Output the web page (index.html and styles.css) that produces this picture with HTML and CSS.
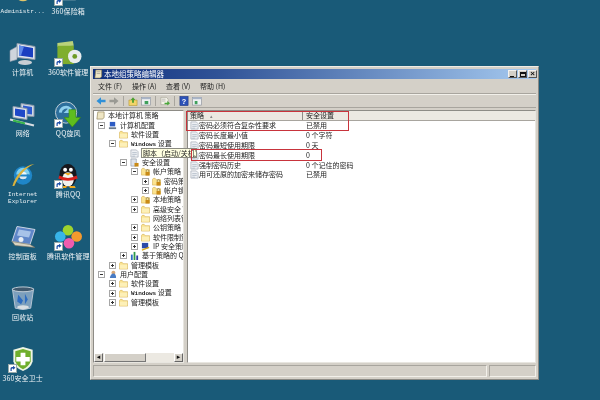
FILE: index.html
```html
<!DOCTYPE html>
<html lang="zh-CN">
<head>
<meta charset="utf-8">
<title>本地组策略编辑器</title>
<link rel="stylesheet" href="styles.css">
</head>
<body>
<svg class="defs" width="0" height="0" aria-hidden="true">
  <defs>
    <symbol id="folder" viewBox="0 0 10 10"><path d="M.5 2.500V9h9V3H4.500L3.500 1.500H1.500z" fill="#fbe38f" stroke="#cfa94a" stroke-width=".6"/><path d="M1 4h8v4.500H1z" fill="#fdf0b8"/></symbol>
    <symbol id="lockfolder" viewBox="0 0 10 10"><path d="M.5 2.500V9h9V3H4.500L3.500 1.500H1.500z" fill="#fbe38f" stroke="#cfa94a" stroke-width=".6"/><rect x="5" y="5.500" width="4.500" height="4" fill="#c98a16"/><path d="M5.800 5.500V4.200a1.400 1.400 0 0 1 2.800 0v1.300" fill="none" stroke="#7a6a40" stroke-width=".7"/></symbol>
    <symbol id="policy" viewBox="0 0 10 10"><path d="M1 1h6l2 2v6H1z" fill="#eef0f4" stroke="#9aa2ae" stroke-width=".7"/><path d="M2.500 4h5M2.500 6h5M2.500 8h3" stroke="#a9b2c0" stroke-width=".8"/></symbol>
    <symbol id="shortcut" viewBox="0 0 9 9"><rect x=".5" y=".5" width="8" height="8" fill="#fff" stroke="#9aa"/><path d="M2.500 7V4.500Q2.500 3 4 3H5V1.800L7.500 3.800 5 5.800V4.500H4.200Q3.700 4.500 3.700 5V7z" fill="#1f4fa8"/></symbol>
    <symbol id="monitor" viewBox="0 0 28 26"><path d="M8 3l18 3v13L8 17z" fill="#dfe6ee" stroke="#8b97a8"/><path d="M10 5l14 2.500v9.500L10 15z" fill="#1a3fc0"/><path d="M10 5l5 1-3 9-2 0z" fill="#5f8ae8"/><path d="M1 10l7-4v13l-7 2z" fill="#cfd5dc" stroke="#8b97a8" stroke-width=".6"/><ellipse cx="16" cy="22" rx="7" ry="2.500" fill="#c8cdd3"/></symbol>
  </defs>
</svg>

<main class="desktop">
  <section class="icons">
    <div class="dicon">
      <svg class="dglyph" viewBox="0 0 28 28"><circle cx="14" cy="14" r="9" fill="#e2c66a"/><circle cx="9" cy="17" r="4" fill="#7fa64a"/><circle cx="19" cy="17" r="4" fill="#7fa64a"/></svg>
      <span class="dlabel dlabel-latin">Administr...</span>
    </div>
    <div class="dicon">
      <svg class="dglyph" viewBox="0 0 28 26"><use href="#monitor"/></svg>
      <span class="dlabel">计算机</span>
    </div>
    <div class="dicon">
      <svg class="dglyph" viewBox="0 0 28 26"><path d="M12 2l13 2v11L12 14z" fill="#cfd8e4" stroke="#8796aa"/><path d="M14 4l9 1.500v7.500L14 12z" fill="#2c5ad0"/><path d="M4 5l14 2v11L4 16z" fill="#dfe5ec" stroke="#8796aa"/><path d="M6 7l10 1.500v7.500L6 14z" fill="#1f48c8"/><path d="M1 18l24 6" stroke="#d8dde2" stroke-width="2"/><path d="M4 19l12 3" stroke="#37b54a" stroke-width="2"/></svg>
      <span class="dlabel">网络</span>
    </div>
    <div class="dicon">
      <svg class="dglyph" viewBox="0 0 28 28"><circle cx="14" cy="14" r="9.500" fill="#1f86c8"/><path d="M7 13h14a7 7 0 0 0-14 0z" fill="#7fd0f0"/><path d="M8 15h8v3H8z" fill="#0f5f9c"/><circle cx="14" cy="14" r="4" fill="#fff" opacity=".85"/><path d="M9 14h11" stroke="#1f86c8" stroke-width="2"/><path d="M3 25C6 14 15 3 26 2 20 4 10 12 5 25z" fill="#d9b23c"/></svg>
      <span class="dlabel dlabel-latin dlabel-wide">Internet Explorer</span>
    </div>
    <div class="dicon">
      <svg class="dglyph" viewBox="0 0 28 26"><path d="M8 2l18 3-5 15-18-3z" fill="#5f86c8" stroke="#c9d4e2"/><path d="M10 5l12 2-2 6-12-2z" fill="#a7c2e8"/><path d="M3 17l18 3 5 3-20-2z" fill="#d8d3c0" stroke="#6b6b60" stroke-width=".6"/><circle cx="12" cy="15" r="2.500" fill="#e7edf4"/></svg>
      <span class="dlabel">控制面板</span>
    </div>
    <div class="dicon">
      <svg class="dglyph" viewBox="0 0 28 28"><path d="M3 4h22l-3 20q-8 3-16 0z" fill="#7c9fbc" stroke="#b9c7d4"/><ellipse cx="14" cy="4.500" rx="11" ry="2.500" fill="#40596e" stroke="#c5d0da"/><path d="M9 10l5 6-2 4-4-3zM16 9l3 6-3 5z" fill="#2d6cc0"/><ellipse cx="14" cy="23" rx="6" ry="2" fill="#d8dee2"/></svg>
      <span class="dlabel">回收站</span>
    </div>
    <div class="dicon">
      <span class="dwrap">
        <svg class="dglyph" viewBox="0 0 28 28"><path d="M14 1l10 3v12q-2 7-10 10Q6 23 4 16V4z" fill="#eef5e4"/><path d="M14 3l8 2.500V16q-2 5-8 8-6-3-8-8V5.500z" fill="#6fae2c"/><path d="M11.500 7h5v4.500H21v4.500h-4.500V20h-5v-4H7v-4.500h4.500z" fill="#fff"/></svg>
        <svg class="dlink dlink-left"><use href="#shortcut"/></svg>
      </span>
      <span class="dlabel">360安全卫士</span>
    </div>

    <div class="dicon">
      <span class="dwrap">
        <svg class="dglyph" viewBox="0 0 28 28"><path d="M7 6h15v16H7z" fill="#d8dde0"/></svg>
        <svg class="dlink"><use href="#shortcut"/></svg>
      </span>
      <span class="dlabel">360保险箱</span>
    </div>
    <div class="dicon">
      <span class="dwrap">
        <svg class="dglyph" viewBox="0 0 28 28"><path d="M3 3l16-2 1 5-17 1z" fill="#b9d27a"/><path d="M3 6h17v19H3z" fill="#7fae2e"/><circle cx="21" cy="17" r="7" fill="#e8ecee"/><circle cx="21" cy="17" r="2.500" fill="#6d9b24"/></svg>
        <svg class="dlink"><use href="#shortcut"/></svg>
      </span>
      <span class="dlabel">360软件管理</span>
    </div>
    <div class="dicon">
      <span class="dwrap">
        <svg class="dglyph" viewBox="0 0 28 28"><circle cx="12" cy="12" r="11" fill="#2d6f9c" stroke="#c6d2d8"/><path d="M6 12a6 6 0 0 1 10-4l-3 3h6" fill="none" stroke="#8fd0ee" stroke-width="3"/><path d="M15 9h7v8h5L18.500 27 10 17h5z" fill="#5fbe1e" stroke="#3d8c10" stroke-width=".6"/></svg>
        <svg class="dlink"><use href="#shortcut"/></svg>
      </span>
      <span class="dlabel">QQ旋风</span>
    </div>
    <div class="dicon">
      <span class="dwrap">
        <svg class="dglyph" viewBox="0 0 28 28"><ellipse cx="14" cy="14" rx="9" ry="12" fill="#17171c"/><ellipse cx="14" cy="18" rx="6" ry="7.500" fill="#f3f3f0"/><circle cx="11" cy="8" r="2" fill="#fff"/><circle cx="17" cy="8" r="2" fill="#fff"/><path d="M10 11.500h8l-4 2.500z" fill="#f0a81e"/><path d="M5 14q9 5 18 0l1 3q-10 5-20 0z" fill="#d8201c"/><path d="M7 25h6l-1 2H6zM15 25h6l1 2h-6z" fill="#f0a81e"/></svg>
        <svg class="dlink"><use href="#shortcut"/></svg>
      </span>
      <span class="dlabel">腾讯QQ</span>
    </div>
    <div class="dicon">
      <span class="dwrap">
        <svg class="dglyph" viewBox="0 0 28 28"><circle cx="14" cy="6.500" r="5.500" fill="#9ed32e"/><circle cx="23" cy="13" r="5.500" fill="#f49a2e"/><circle cx="6" cy="13" r="5.500" fill="#38b4e8"/><circle cx="15" cy="20" r="5.500" fill="#ee5cae"/></svg>
        <svg class="dlink"><use href="#shortcut"/></svg>
      </span>
      <span class="dlabel">腾讯软件管理</span>
    </div>
  </section>

  <article class="window">
    <header class="titlebar">
      <svg class="titleicon" viewBox="0 0 10 11"><path d="M2 1h6.500v7L7 10H1z" fill="#efe6c4" stroke="#8a7c50" stroke-width=".7"/><path d="M3 3h4M3 5h4" stroke="#8f8f8f" stroke-width=".7"/></svg>
      <h1 class="title">本地组策略编辑器</h1>
      <div class="controls">
        <button class="ctl ctl-min"><i></i></button>
        <button class="ctl ctl-max"><i></i></button>
        <button class="ctl ctl-close">×</button>
      </div>
    </header>

    <nav class="menubar">
      <span>文件 (F)</span><span>操作 (A)</span><span>查看 (V)</span><span>帮助 (H)</span>
    </nav>

    <div class="toolbar">
      <svg class="tool" viewBox="0 0 11 10"><path d="M.5 5L5.500 1v2.500H10.500v3H5.500V9z" fill="#2f90d8"/></svg>
      <svg class="tool" viewBox="0 0 11 10"><path d="M10.500 5L5.500 1v2.500H.5v3H5.500V9z" fill="#9a9a94"/></svg>
      <i class="tsep"></i>
      <svg class="tool" viewBox="0 0 11 10"><path d="M1 4h9v6H1z" fill="#f2d468" stroke="#b4932c" stroke-width=".6"/><path d="M5.500 1L8 4H6.500v3h-2V4H3z" fill="#4ca02e"/></svg>
      <svg class="tool" viewBox="0 0 11 10"><rect x=".5" y="1" width="10" height="8.500" fill="#eef0f2" stroke="#8a8f98" stroke-width=".7"/><path d="M.5 1h10v2H.5z" fill="#a8b4c8"/><rect x="4" y="5" width="4" height="3.500" fill="#3fa05a"/></svg>
      <i class="tsep"></i>
      <svg class="tool" viewBox="0 0 11 10"><path d="M1 1h6l2 2v6H1z" fill="#f4f2e8" stroke="#9a9a8a" stroke-width=".6"/><path d="M2 3h4M2 5h4" stroke="#a0a0a0" stroke-width=".7"/><path d="M5 7h3V5l3 2.500L8 10V8.500H5z" fill="#49a83a"/></svg>
      <i class="tsep"></i>
      <svg class="tool" viewBox="0 0 11 11"><rect x="1" y=".5" width="9" height="10" fill="#2c52b8" stroke="#16307c" stroke-width=".6"/><text x="5.500" y="8.500" class="qmark">?</text></svg>
      <svg class="tool" viewBox="0 0 11 10"><rect x=".5" y="1" width="10" height="8.500" fill="#eef0f2" stroke="#8a8f98" stroke-width=".7"/><path d="M.5 1h10v2H.5z" fill="#a8b4c8"/><rect x="3" y="5" width="3" height="3.500" fill="#3fa05a"/></svg>
    </div>

    <div class="panes">
      <aside class="treepane">
        <ul class="tree">
          <li class="node root"><svg class="nicon" viewBox="0 0 10 10"><path d="M2 1h7v6L7.500 9H1z" fill="#efe6c4" stroke="#8a7c50" stroke-width=".7"/></svg><span>本地计算机 策略</span></li>
          <li class="node l0"><b class="ex minus"></b><svg class="nicon" viewBox="0 0 10 10"><rect x="2" y="1" width="6" height="5" fill="#2d5cc4"/><path d="M1 8h8" stroke="#6b7a8c" stroke-width="2"/></svg><span>计算机配置</span></li>
          <li class="node l1"><b class="ex none"></b><svg class="nicon"><use href="#folder"/></svg><span>软件设置</span></li>
          <li class="node l1"><b class="ex minus"></b><svg class="nicon"><use href="#folder"/></svg><span><span class="latin">Windows</span> 设置</span></li>
          <li class="node l2"><b class="ex none"></b><svg class="nicon"><use href="#policy"/></svg><span>脚本（启动/关机）</span></li>
          <li class="node l2"><b class="ex minus"></b><svg class="nicon" viewBox="0 0 10 10"><path d="M1 1h6v8H1z" fill="#dfe3ea" stroke="#7d8798" stroke-width=".6"/><rect x="5" y="5.500" width="4.500" height="4" fill="#c98a16"/></svg><span>安全设置</span></li>
          <li class="node l3"><b class="ex minus"></b><svg class="nicon"><use href="#lockfolder"/></svg><span>帐户策略</span></li>
          <li class="node l4"><b class="ex plus"></b><svg class="nicon"><use href="#lockfolder"/></svg><span>密码策略</span></li>
          <li class="node l4"><b class="ex plus"></b><svg class="nicon"><use href="#lockfolder"/></svg><span>帐户锁定策略</span></li>
          <li class="node l3"><b class="ex plus"></b><svg class="nicon"><use href="#lockfolder"/></svg><span>本地策略</span></li>
          <li class="node l3"><b class="ex plus"></b><svg class="nicon"><use href="#folder"/></svg><span>高级安全 Windows</span></li>
          <li class="node l3"><b class="ex none"></b><svg class="nicon"><use href="#folder"/></svg><span>网络列表管理器</span></li>
          <li class="node l3"><b class="ex plus"></b><svg class="nicon"><use href="#folder"/></svg><span>公钥策略</span></li>
          <li class="node l3"><b class="ex plus"></b><svg class="nicon"><use href="#folder"/></svg><span>软件限制策略</span></li>
          <li class="node l3"><b class="ex plus"></b><svg class="nicon" viewBox="0 0 10 10"><rect x="1" y="1" width="7" height="6" fill="#2c4aa8"/><path d="M1 9l8-3" stroke="#d8a818" stroke-width="1.500"/></svg><span>IP 安全策略</span></li>
          <li class="node l2"><b class="ex plus"></b><svg class="nicon" viewBox="0 0 10 10"><path d="M1 4h2v6H1z" fill="#2c6cc4"/><path d="M4 1h2v9H4z" fill="#2c9a4a"/><path d="M7 5h2v5H7z" fill="#2c3ca4"/></svg><span>基于策略的 QoS</span></li>
          <li class="node l1"><b class="ex plus"></b><svg class="nicon"><use href="#folder"/></svg><span>管理模板</span></li>
          <li class="node l0"><b class="ex minus"></b><svg class="nicon" viewBox="0 0 10 10"><circle cx="6" cy="3" r="2.200" fill="#d8a878"/><path d="M2 9q1-5 4-5t3 5z" fill="#4a7cc4"/></svg><span>用户配置</span></li>
          <li class="node l1"><b class="ex plus"></b><svg class="nicon"><use href="#folder"/></svg><span>软件设置</span></li>
          <li class="node l1"><b class="ex plus"></b><svg class="nicon"><use href="#folder"/></svg><span><span class="latin">Windows</span> 设置</span></li>
          <li class="node l1"><b class="ex plus"></b><svg class="nicon"><use href="#folder"/></svg><span>管理模板</span></li>
        </ul>
        <div class="hscroll">
          <span class="sbtn">◂</span>
          <span class="sthumb"></span>
          <span class="strack"></span>
          <span class="sbtn">▸</span>
        </div>
      </aside>

      <section class="listpane">
        <div class="listhead">
          <span class="col col-name">策略 <em>▴</em></span>
          <span class="col col-val">安全设置</span>
        </div>
        <div class="row"><span class="col col-name"><svg class="nicon"><use href="#policy"/></svg>密码必须符合复杂性要求</span><span class="col col-val">已禁用</span></div>
        <div class="row"><span class="col col-name"><svg class="nicon"><use href="#policy"/></svg>密码长度最小值</span><span class="col col-val">0 个字符</span></div>
        <div class="row"><span class="col col-name"><svg class="nicon"><use href="#policy"/></svg>密码最短使用期限</span><span class="col col-val">0 天</span></div>
        <div class="row"><span class="col col-name"><svg class="nicon"><use href="#policy"/></svg>密码最长使用期限</span><span class="col col-val">0</span></div>
        <div class="row"><span class="col col-name"><svg class="nicon"><use href="#policy"/></svg>强制密码历史</span><span class="col col-val">0 个记住的密码</span></div>
        <div class="row"><span class="col col-name"><svg class="nicon"><use href="#policy"/></svg>用可还原的加密来储存密码</span><span class="col col-val">已禁用</span></div>
      </section>
    </div>

    <footer class="statusbar"><span class="sb1"></span><span class="sb2"></span></footer>

    <div class="tooltip">脚本（启动/关机）</div>
    <div class="mark mark-a"></div>
    <div class="mark mark-b"></div>
  </article>
</main>
</body>
</html>
```

FILE: styles.css
```css
* { box-sizing: border-box; }
html, body { margin: 0; padding: 0; }
body {
  width: 600px;
  height: 400px;
  overflow: hidden;
  font-family: "Noto Sans CJK SC", "DejaVu Sans", sans-serif;
  font-size: 7px;
  color: #1c1c1c;
}
.defs { position: absolute; }
.latin { font-family: "Liberation Mono", monospace; font-size: 6px; font-weight: 700; }

.desktop {
  position: relative;
  width: 600px;
  height: 400px;
  background: #195a78;
  overflow: hidden;
  filter: blur(.35px);
}

/* Desktop icons */
.icons {
  position: absolute;
  left: 0;
  top: -21.500px;
  display: grid;
  grid-auto-flow: column;
  grid-template-rows: repeat(7, 61.300px);
  grid-template-columns: repeat(2, 45.500px);
}
.dicon {
  display: flex;
  flex-direction: column;
  align-items: center;
  color: #eef3f6;
  line-height: 7px;
  text-align: center;
}
.dwrap { position: relative; display: block; width: 28px; height: 27px; }
.dglyph { display: block; width: 28px; height: 27px; flex: none; }
.dlink { position: absolute; left: 0; bottom: 0; width: 9px; height: 9px; }
.dlink-left { left: -1px; }
.dlabel { margin-top: 2px; font-size: 7px; white-space: nowrap; letter-spacing: .1px; }
.dlabel-latin { font-family: "Liberation Mono", monospace; font-size: 6px; }
.dlabel-wide { white-space: normal; width: 36px; }

/* Window */
.window {
  position: absolute;
  left: 90px;
  top: 66px;
  width: 449px;
  height: 314px;
  display: flex;
  flex-direction: column;
  background: #d4d0c8;
  border: 1px solid #eeece6;
  border-right-color: #8a8984;
  border-bottom-color: #8a8984;
  padding: 2px;
}
.titlebar {
  flex: none;
  height: 10px;
  display: flex;
  align-items: center;
  gap: 1px;
  padding-left: 1px;
  background: linear-gradient(90deg, #10307f 0%, #2f5296 28%, #a6caf0 100%);
}
.titleicon { width: 9px; height: 10px; flex: none; }
.title { margin: 0; font-size: 7.500px; font-weight: 400; color: #fff; line-height: 10px; }
.controls { margin-left: auto; margin-right: -1px; display: flex; gap: 1px; }
.ctl {
  width: 9px;
  height: 8px;
  padding: 0;
  display: flex;
  align-items: center;
  justify-content: center;
  font: 700 8px/8px "Liberation Sans", sans-serif;
  color: #111;
  background: #d4d0c8;
  border: 1px solid #f4f2ee;
  border-right-color: #555;
  border-bottom-color: #555;
}
.ctl-min i { display: block; width: 4px; height: 1px; margin-top: 4px; margin-right: 1px; background: #111; }
.ctl-max i { display: block; width: 6px; height: 5px; border: 1px solid #111; border-top-width: 2px; }

.menubar {
  flex: none;
  height: 15px;
  display: flex;
  align-items: center;
  gap: 10px;
  padding-left: 5px;
  border-bottom: 1px solid #a8a59e;
  line-height: 15px;
}
.menubar span { white-space: nowrap; font-size: 7px; width: 24px; }

.toolbar {
  flex: none;
  height: 14px;
  display: flex;
  align-items: center;
  gap: 3px;
  padding-left: 3px;
  border-top: 1px solid #f2f0ea;
  border-bottom: 1px solid #a8a59e;
}
.tool { width: 10px; height: 10px; flex: none; }
.tsep { width: 1px; height: 10px; background: #a8a59e; margin: 0 1px; }
.qmark { font: 700 8px "Liberation Sans", sans-serif; fill: #fff; text-anchor: middle; }

.panes {
  flex: 1;
  min-height: 0;
  display: flex;
  gap: 3px;
  padding-top: 2px;
}
.treepane, .listpane {
  background: #fff;
  border: 1px solid #8e8c86;
  border-right-color: #e8e6e0;
  border-bottom-color: #e8e6e0;
}
.treepane {
  width: 91px;
  flex: none;
  display: flex;
  flex-direction: column;
  overflow: hidden;
}
.tree {
  flex: 1;
  margin: 0;
  padding: 0;
  list-style: none;
  overflow: hidden;
}
.node {
  height: 9.350px;
  display: flex;
  align-items: center;
  white-space: nowrap;
  line-height: 9px;
}
.root { padding-left: 2px; }
.l0 { padding-left: 4px; }
.l1 { padding-left: 15px; }
.l2 { padding-left: 26px; }
.l3 { padding-left: 37px; }
.l4 { padding-left: 48px; }
.ex {
  position: relative;
  flex: none;
  width: 7px;
  height: 7px;
  margin-right: 3px;
  background: #fff;
  border: 1px solid #a6a6a6;
}
.ex.none { border: 0; background: none; }
.minus::before, .plus::before {
  content: "";
  position: absolute;
  left: 1px;
  top: 2px;
  width: 3px;
  height: 1px;
  background: #333;
}
.plus::after {
  content: "";
  position: absolute;
  left: 2px;
  top: 1px;
  width: 1px;
  height: 3px;
  background: #333;
}
.nicon { flex: none; width: 9px; height: 9px; margin-right: 3px; }

.hscroll {
  flex: none;
  height: 9px;
  display: flex;
  background: #ece9e2;
}
.sbtn {
  width: 9px;
  display: flex;
  align-items: center;
  justify-content: center;
  font: 7px/7px "DejaVu Sans", sans-serif;
  color: #111;
  background: #d4d0c8;
  border: 1px solid #fff;
  border-right-color: #666;
  border-bottom-color: #666;
}
.sthumb {
  width: 42px;
  margin-left: 1px;
  background: #d4d0c8;
  border: 1px solid #fff;
  border-right-color: #777;
  border-bottom-color: #777;
}
.strack { flex: 1; }

.listpane { flex: 1; min-width: 0; overflow: hidden; }
.listhead {
  height: 10px;
  display: flex;
  background: #ece9e2;
  border-bottom: 1px solid #a8a59e;
  line-height: 9px;
}
.col { display: flex; align-items: center; white-space: nowrap; }
.col-name { width: 115px; flex: none; }
.listhead .col-name { padding-left: 2px; border-right: 1px solid #8e8c86; }
.listhead .col-val { padding-left: 3px; }
.listhead em { margin-left: 6px; font-style: normal; font-size: 5px; color: #888; }
.row { height: 9.800px; display: flex; line-height: 9px; }
.row .nicon { margin: 0 0 0 2px; }
.row .col-val { padding-left: 3px; }

.statusbar {
  flex: none;
  height: 12px;
  display: flex;
  gap: 2px;
  margin-top: 2px;
}
.sb1, .sb2 {
  border: 1px solid #a8a59e;
  border-right-color: #f2f0ea;
  border-bottom-color: #f2f0ea;
}
.sb1 { width: 394px; }
.sb2 { flex: 1; }

/* Overlays */
.tooltip {
  position: absolute;
  left: 50px;
  top: 81px;
  width: 56px;
  height: 10px;
  overflow: hidden;
  white-space: nowrap;
  padding-left: 1px;
  line-height: 8px;
  background: #ffffe1;
  border: 1px solid #8a8a80;
}
.mark { position: absolute; border: 1px solid #c8343c; }
.mark-a { left: 95px; top: 44px; width: 163px; height: 20px; }
.mark-b { left: 100px; top: 82px; width: 131px; height: 12px; }
```
